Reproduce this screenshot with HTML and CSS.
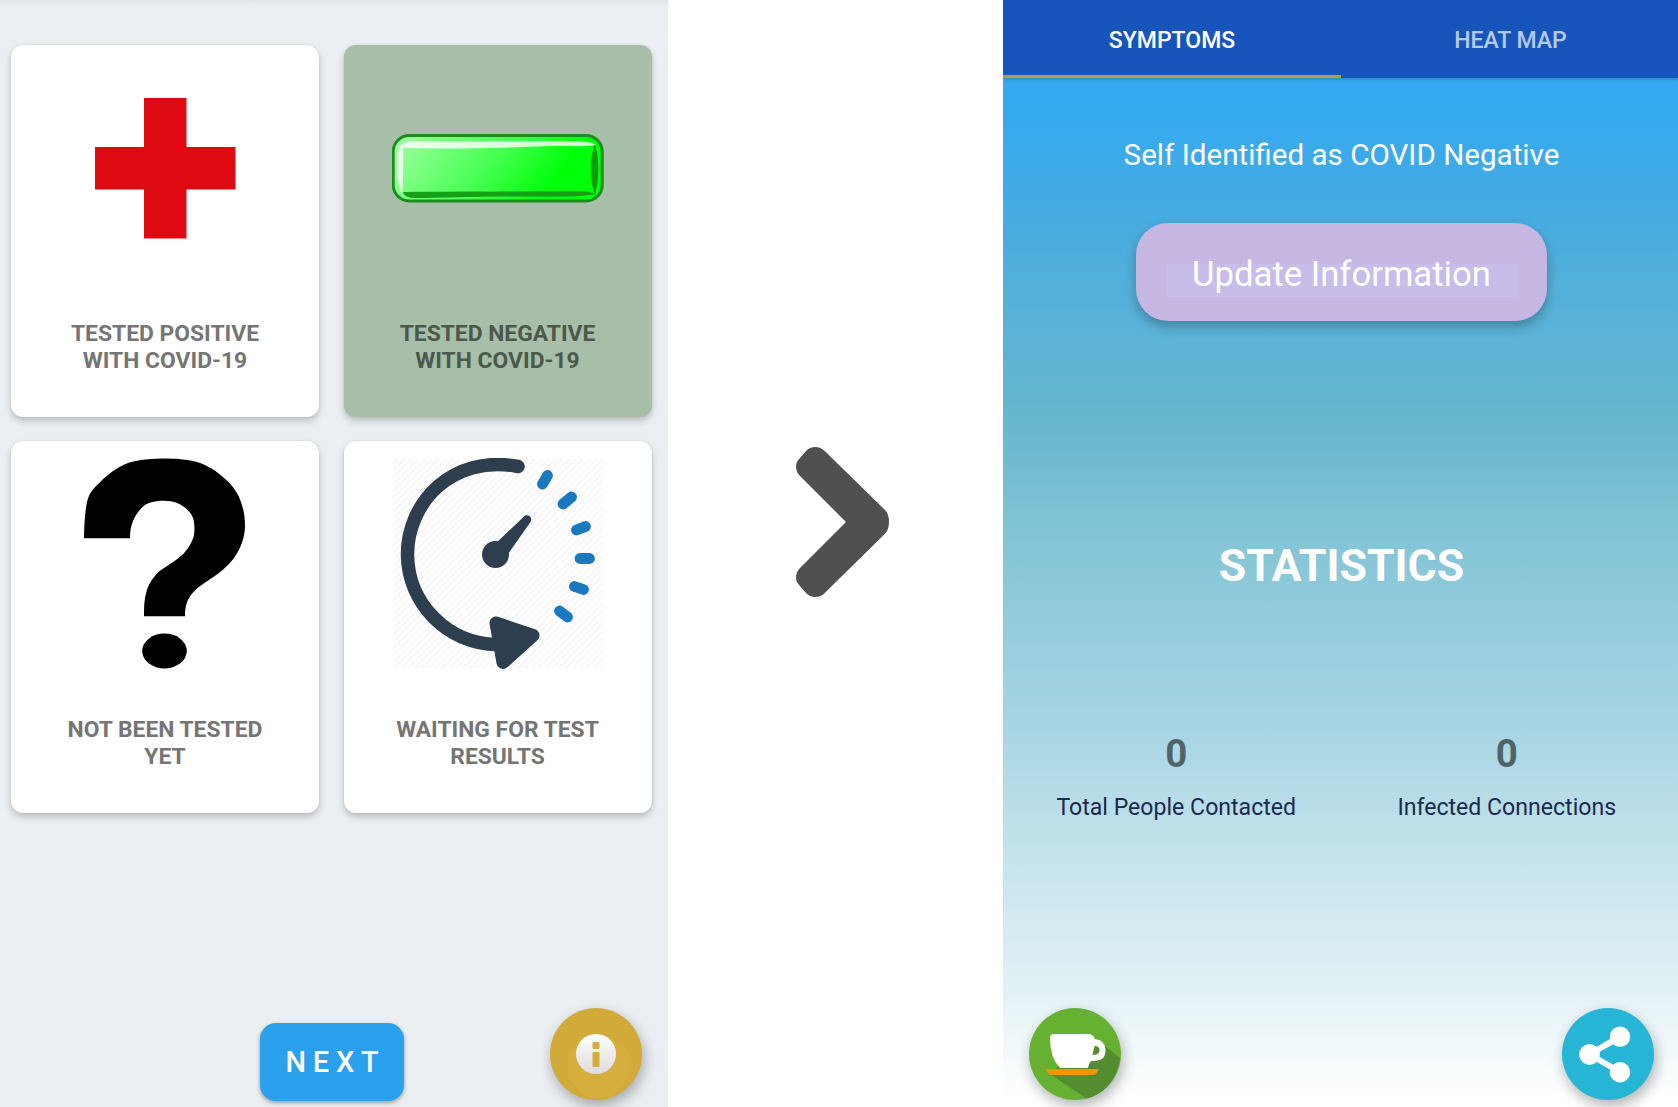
FILE: index.html
```html
<!DOCTYPE html>
<html lang="en">
<head>
<meta charset="utf-8">
<title>COVID self report</title>
<link rel="stylesheet" href="styles.css">
</head>
<body>
<main class="stage">
  <section class="screen report">
    <div class="choices">
      <article class="card">
        <svg class="art" viewBox="0 0 212 212"><path fill="#de0a12" d="M85 36h42.500v49h49v42.500h-49v49h-42.500v-49h-49v-42.500h49z"/></svg>
        <p class="label">TESTED POSITIVE<br>WITH COVID-19</p>
      </article>
      <article class="card selected">
        <svg class="art" viewBox="0 0 212 212">
          <defs><linearGradient id="gel" gradientUnits="userSpaceOnUse" x1="18" y1="56" x2="140" y2="150"><stop offset="0" stop-color="#a2ffa2"/><stop offset=".55" stop-color="#4dff59"/><stop offset="1" stop-color="#00ff08"/></linearGradient></defs>
          <rect x="1.200" y="73.500" width="209" height="65.500" rx="16" fill="url(#gel)" stroke="#1c8c1c" stroke-width="3"/>
          <path d="M10 83C12 79 20 79 30 79.500C80 80 140 79 170 79C190 79 200 80 204 82.500C200 85 180 84 160 84C110 86 60 87 16 86C12 86 10 85 10 83z" fill="#fff" opacity=".8"/>
          <path d="M9 82C3 96 4 120 10 133Q12 108 11 85z" fill="#fff" opacity=".8"/>
          <path d="M11 130C30 129.500 50 130 70 129.500C120 130 160 129 195 129.500L204 132C190 135.500 150 134.500 120 134.500C80 134.500 50 136 24 136Q12 136 11 130z" fill="#16a016"/>
          <path d="M203 82C197 96 198 120 203 133Q210 106 203 82z" fill="#0c9c0c"/>
        </svg>
        <p class="label">TESTED NEGATIVE<br>WITH COVID-19</p>
      </article>
      <article class="card">
        <svg class="art" viewBox="0 0 212 212">
          <path d="M25 80.300C25.300 62 26.500 50 28.500 42C31 34 35 30 41 24.300C51 14.500 62 6.500 74.300 3.600C84 1.300 94 .6 104.300 .6C116 .6 128 1.300 137.700 4C147 6.600 154 11 161 16.500C169 23 176 30 179.800 38.500C184 48 186 57 186 67.700C186 80 181 92 174.300 101C168 109 161 114.500 154.300 119C146 125 140 128 134.300 134.300C128 141 126 148 126 158.300H85C85 150 85 141 87.700 132.700C90 125 95 118 101 112.700C109 107 117 103 124.300 96C130 90 135 81 135.300 74.300C136 63 134 57 129.300 52.700C123 46 115 42.700 105 42.700C97 42.700 89 44 84.300 48.300C76 56 71 66 71 80.300z"/>
          <ellipse cx="105.500" cy="193" rx="22.300" ry="17.500"/>
        </svg>
        <p class="label">NOT BEEN TESTED<br>YET</p>
      </article>
      <article class="card">
        <svg class="art" viewBox="0 0 212 212">
          <defs><pattern id="hatch" width="6.850" height="6.850" patternUnits="userSpaceOnUse"><path d="M-1 7.850L7.850-1M-1 1L1-1M5.850 7.850L7.850 5.850" stroke="#f0f0f0" stroke-width="1.200"/></pattern></defs>
          <rect x="1.500" y="1" width="209" height="209" fill="url(#hatch)"/>
          <path d="M126 8.500C60-4 15 45 15.500 97C16 145 55 186 105 186.500" fill="none" stroke="#2d3e4f" stroke-width="13.500" stroke-linecap="round"/>
          <path d="M104 165L141 177.500L111 204.500z" fill="#2d3e4f" stroke="#2d3e4f" stroke-width="13" stroke-linejoin="round"/>
          <circle cx="103.500" cy="96.500" r="13.500" fill="#2d3e4f"/>
          <path d="M104 85L131.500 59A4 4 0 0 1 138.500 64L116 96z" fill="#2d3e4f"/>
          <path d="M150.500 26L155.500 17.500M171 46L179.500 39M184.500 72L193.500 68.500M188 100.500H197.500M182.500 128.500L191.500 131.500M167.500 153L175.500 159" stroke="#1a78bf" stroke-width="10.800" stroke-linecap="round"/>
        </svg>
        <p class="label">WAITING FOR TEST<br>RESULTS</p>
      </article>
    </div>
    <footer class="report-actions">
      <button class="next">NEXT</button>
      <button class="fab info" aria-label="Information">
        <svg viewBox="0 0 92 92"><defs><linearGradient id="pearl" x2="0" y2="1"><stop offset="0" stop-color="#fff"/><stop offset="1" stop-color="#dcdcdc"/></linearGradient></defs><path d="M46 26Q62 26 79 45V69L63 88Q46 94 32 86L18 70V45z" fill="#d5ae3d"/><circle cx="46" cy="46" r="20" fill="url(#pearl)"/><path d="M43.500 34h5q1 0 1 1v5q0 1-1 1h-5q-1 0-1-1v-5q0-1 1-1zM43.500 44h5q1 0 1 1v13q0 1-1 1h-5q-1 0-1-1v-13q0-1 1-1z" fill="#d4ad3c"/></svg>
      </button>
    </footer>
  </section>

  <div class="arrow">
    <svg viewBox="0 0 93 150"><path class="chevron" d="M4 29Q0 25 0 19.500Q0 15 3.500 11.500L10 4Q14 0 19 0Q25 0 29 4.300L89.700 63.700Q93 67.500 93 75Q93 82 89.700 86L29 145.700Q25 150 19 150Q14 150 10 146L3.500 138.500Q0 135 0 130.500Q0 125 4 121L50 75z"/></svg>
  </div>

  <section class="screen status">
    <nav class="tabs">
      <a class="tab active">SYMPTOMS</a>
      <a class="tab">HEAT MAP</a>
    </nav>
    <div class="status-body">
      <p class="identity">Self Identified as COVID Negative</p>
      <button class="update"><span class="update-text">Update Information</span></button>
      <h1 class="heading">STATISTICS</h1>
      <div class="stats">
        <div class="stat"><strong class="value">0</strong><span class="caption">Total People Contacted</span></div>
        <div class="stat"><strong class="value">0</strong><span class="caption">Infected Connections</span></div>
      </div>
      <footer class="status-actions">
        <button class="fab tea" aria-label="Tea break">
          <svg viewBox="0 0 92 92"><path d="M21 66L62 27L91 50C88 72 75 87 58 91z" fill="#548c30"/><path d="M21 30Q21 26 25 26H59Q64 26 66 31Q76 32 76.500 42Q77 52 66 53H62Q60 55 59 60H31Q21 50 21 30z" fill="#fff"/><path d="M65.500 38Q71 38 70.500 43Q70 47 63.500 47z" fill="#548c30"/><path d="M16 61H70Q68 66.500 64 67H22Q18 65 16 61z" fill="#f29400"/></svg>
        </button>
        <button class="fab share" aria-label="Share">
          <svg viewBox="0 0 92 92"><path d="M58 28.700L27.500 46.500L58 64" fill="none" stroke="#fff" stroke-width="6"/><circle cx="58" cy="28.700" r="10.200" fill="#fff"/><circle cx="27.500" cy="46.500" r="10.400" fill="#fff"/><circle cx="58" cy="64.300" r="10.200" fill="#fff"/></svg>
        </button>
      </footer>
    </div>
  </section>
</main>
</body>
</html>
```
FILE: styles.css
```css
* { box-sizing: border-box; }
body { margin: 0; background: #fff; font-family: Roboto, "Liberation Sans", sans-serif; }
button { border: 0; padding: 0; font: inherit; color: #fff; }
p, h1 { margin: 0; }

.stage { display: grid; grid-template-columns: 668px 335px 675px; height: 1107px; overflow: hidden; }
.screen { display: flex; flex-direction: column; min-width: 0; }

.report { background: linear-gradient(#dfe3e6, #ebeff2 5px); overflow: hidden; }
.choices { display: grid; grid-template-columns: 308px 308px; grid-auto-rows: 372px; gap: 24px 24.500px; padding: 45px 0 0 11px; }
.card { display: flex; flex-direction: column; align-items: center; padding-top: 17px; background: #fff; border-radius: 12px; box-shadow: 0 4px 7px rgba(0, 0, 0, .2), 0 0 2px rgba(0, 0, 0, .12); }
.card.selected { background: #a7bfa8; }
.art { display: block; width: 212px; height: 212px; }
.label { margin-top: 46px; text-align: center; font-size: 22.850px; font-weight: 700; line-height: 27px; color: #757575; }
.selected .label { color: #4b584b; }
.report-actions { position: relative; flex: 1; }
.next { position: absolute; left: 260px; bottom: 6px; width: 144px; height: 78px; padding-left: 7px; border-radius: 16px; background: #2ba0ec; font-size: 29px; font-weight: 500; letter-spacing: 6.800px; box-shadow: 0 2px 4px rgba(0, 0, 0, .35); }
.fab { width: 92px; height: 92px; border-radius: 50%; box-shadow: 2px 6px 14px rgba(0, 0, 0, .3); overflow: hidden; }
.fab svg { display: block; width: 100%; height: 100%; }
.info { position: absolute; left: 550px; bottom: 7px; background: #d2aa39; }

.arrow { display: grid; justify-items: start; align-content: start; padding: 447px 0 0 128px; }
.arrow svg { width: 93px; height: 150px; }
.chevron { fill: #505050; }

.tabs { display: grid; grid-template-columns: 338px 337px; height: 78px; background: #1755bd; position: relative; box-shadow: 0 1px 4px rgba(0, 0, 0, .25); clip-path: inset(0 0 -6px 0); }
.tab { display: grid; place-items: center; padding: 6px 0 0 2px; border-bottom: 3px solid transparent; font-size: 23px; font-weight: 500; color: rgba(255, 255, 255, .7); }
.tab.active { padding-left: 0; color: #fff; border-color: #c0993c; }
.status-body { flex: 1; display: flex; flex-direction: column; align-items: center; padding-left: 2px; background: linear-gradient(#33aaf4 0, #35a9ef 40px, #4badde 160px, #5cb3d6 262px, #63b5cd 325px, #82c4d6 455px, #aed8e6 680px, #c2e2ea 765px, #e2f1f6 910px, #fcfefe 1010px, #fff); }
.identity { margin-top: 59px; font-size: 29.600px; line-height: 36px; color: #fff; }
.update { display: grid; place-items: center; margin-top: 50px; padding-top: 4px; width: 411px; height: 98px; border-radius: 32px; background: #c6b6e2; box-shadow: 0 5px 12px rgba(0, 0, 0, .28); }
.update-text { font-size: 34.700px; padding: 0 26px; line-height: 46px; background: linear-gradient(transparent 13px, #c8bceb 13px); }
.heading { margin-top: 218px; font-size: 44.600px; line-height: 54px; color: #fff; }
.stats { display: grid; grid-template-columns: 1fr 1fr; width: 661px; margin-top: 138px; }
.stat { display: flex; flex-direction: column; align-items: center; }
.value { font-size: 38.500px; line-height: 46px; color: #526368; }
.caption { margin-top: 17px; font-size: 23.100px; line-height: 28px; color: #1a2950; }
.status-actions { display: flex; justify-content: space-between; width: 100%; margin-top: auto; padding: 0 24px 7px 24px; }
.tea { background: #67b132; }
.share { background: #26b5d5; }
```
